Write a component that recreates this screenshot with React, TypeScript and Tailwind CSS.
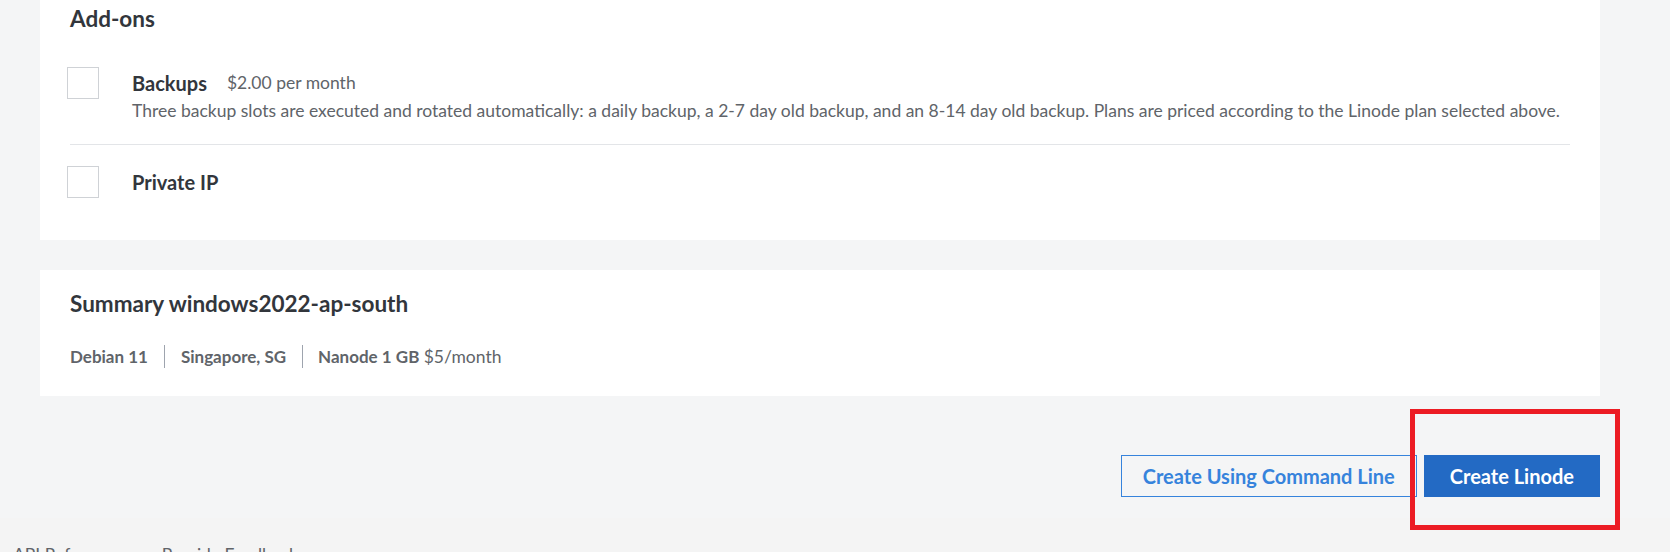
import React from "react";

function Checkbox() {
  return (
    <div className="ml-[-3px] h-[32px] w-[32px] shrink-0 border border-[#cfd2d6] bg-white" />
  );
}

export default function App() {
  return (
    <div className="h-[552px] w-[1670px] overflow-hidden bg-[#f4f5f6] font-['Lato',sans-serif]">
      <div className="ml-[40px] w-[1560px]">
        {/* Add-ons card */}
        <section className="bg-white px-[30px] pt-[5px] pb-[42px]">
          <h2 className="text-[22.5px] leading-[27px] font-bold text-[#32363c]">Add-ons</h2>
          <div className="mt-[35px] flex items-start">
            <Checkbox />
            <div className="ml-[33px]">
              <div className="flex h-[32px] items-center">
                <span className="text-[20px] font-bold text-[#32363c]">Backups</span>
                <span className="ml-[20px] text-[17.5px] text-[#606469]">$2.00 per month</span>
              </div>
              <p className="text-[17.5px] leading-[24px] text-[#606469]">
                Three backup slots are executed and rotated automatically: a daily backup, a 2-7 day old backup, and an 8-14 day old backup. Plans are priced according to the Linode plan selected above.
              </p>
            </div>
          </div>
          <div className="mt-[21px] h-px bg-[#e3e5e8]" />
          <div className="mt-[21px] flex items-center">
            <Checkbox />
            <span className="ml-[33px] text-[20px] leading-[32px] font-bold text-[#32363c]">Private IP</span>
          </div>
        </section>

        {/* Summary card */}
        <section className="mt-[30px] bg-white px-[30px] pt-[20px] pb-[28px]">
          <h2 className="text-[22.5px] leading-[27px] font-bold text-[#32363c]">Summary windows2022-ap-south</h2>
          <div className="mt-[28px] flex text-[17px] leading-[23px] text-[#606469]">
            <span className="border-r border-[#9ea4ae] pr-[16px] font-bold">Debian 11</span>
            <span className="border-r border-[#9ea4ae] px-[16px] font-bold">Singapore, SG</span>
            <span className="pl-[15px]">
              <span className="font-bold">Nanode 1 GB</span> <span className="text-[17.5px]">$5/month</span>
            </span>
          </div>
        </section>

        {/* Actions */}
        <div className="mt-[59px] flex justify-end gap-[7px]">
          <button className="h-[42px] border border-[#3683dc] bg-transparent px-[21px] text-[20px] font-bold text-[#3683dc]">
            Create Using Command Line
          </button>
          <div className="relative">
            <button className="h-[42px] bg-[#236ac4] px-[26px] text-[20px] font-bold text-white">
              Create Linode
            </button>
            <div className="pointer-events-none absolute top-[-46px] right-[-20px] bottom-[-33px] left-[-14px] border-[5px] border-[#ec1c24]" />
          </div>
        </div>
      </div>

      {/* Footer */}
      <footer className="mt-[21px] flex gap-[40px] bg-[#f4f4f4] pt-[26px] pl-[13px] text-[17.5px] leading-[21px] text-[#606469]">
        <span>API Reference</span>
        <span>Provide Feedback</span>
      </footer>
    </div>
  );
}
